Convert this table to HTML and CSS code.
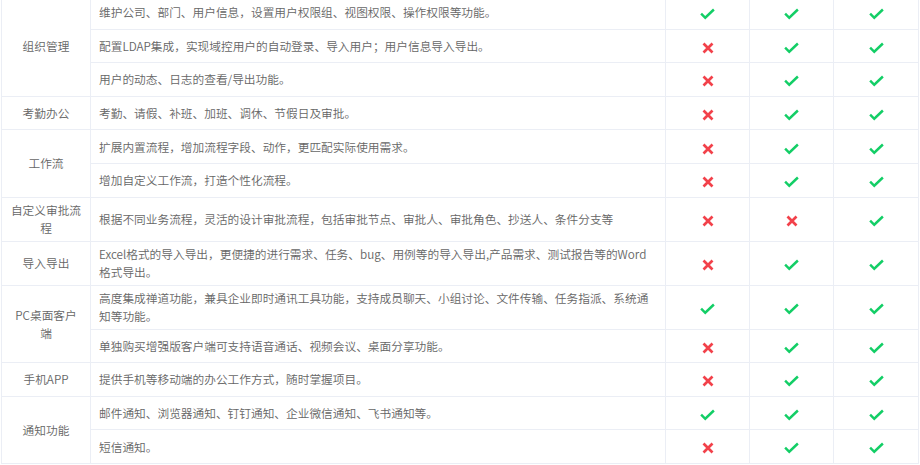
FILE: index.html
```html
<!DOCTYPE html>
<html lang="zh-CN">
<head>
    <meta charset="UTF-8">
    <meta name="viewport" content="width=device-width, initial-scale=1.0">
    <title>功能对比</title>
    <link rel="stylesheet" href="styles.css">
</head>
<body>

    <svg class="defs" width="0" height="0">
      <symbol id="yes" viewBox="0 0 16 12">
        <polyline points="1.2,5.6 5.6,10 14.8,1.2" fill="none" stroke="#13ce66" stroke-width="2.6" stroke-linejoin="miter" />
      </symbol>
      <symbol id="no" viewBox="0 0 12 12">
        <path d="M1.5 1.5 L10.5 10.5 M10.5 1.5 L1.5 10.5" fill="none" stroke="#f2414a" stroke-width="2.7" />
      </symbol>
    </svg>

    <table class="compare">
      <colgroup>
        <col class="col-cat">
        <col class="col-desc">
        <col class="col-mark">
        <col class="col-mark">
        <col class="col-last">
      </colgroup>
      <tbody>
        <tr>
          <td class="cat" rowspan="3">组织管理</td>
          <td class="desc">维护公司、部门、用户信息，设置用户权限组、视图权限、操作权限等功能。</td>
          <td class="mark"><svg class="ok"><use href="#yes"/></svg></td>
          <td class="mark"><svg class="ok"><use href="#yes"/></svg></td>
          <td class="mark"><svg class="ok"><use href="#yes"/></svg></td>
        </tr>
        <tr>
          <td class="desc">配置LDAP集成，实现域控用户的自动登录、导入用户；用户信息导入导出。</td>
          <td class="mark"><svg class="bad"><use href="#no"/></svg></td>
          <td class="mark"><svg class="ok"><use href="#yes"/></svg></td>
          <td class="mark"><svg class="ok"><use href="#yes"/></svg></td>
        </tr>
        <tr>
          <td class="desc">用户的动态、日志的查看/导出功能。</td>
          <td class="mark"><svg class="bad"><use href="#no"/></svg></td>
          <td class="mark"><svg class="ok"><use href="#yes"/></svg></td>
          <td class="mark"><svg class="ok"><use href="#yes"/></svg></td>
        </tr>
        <tr>
          <td class="cat">考勤办公</td>
          <td class="desc">考勤、请假、补班、加班、调休、节假日及审批。</td>
          <td class="mark"><svg class="bad"><use href="#no"/></svg></td>
          <td class="mark"><svg class="ok"><use href="#yes"/></svg></td>
          <td class="mark"><svg class="ok"><use href="#yes"/></svg></td>
        </tr>
        <tr>
          <td class="cat" rowspan="2">工作流</td>
          <td class="desc">扩展内置流程，增加流程字段、动作，更匹配实际使用需求。</td>
          <td class="mark"><svg class="bad"><use href="#no"/></svg></td>
          <td class="mark"><svg class="ok"><use href="#yes"/></svg></td>
          <td class="mark"><svg class="ok"><use href="#yes"/></svg></td>
        </tr>
        <tr>
          <td class="desc">增加自定义工作流，打造个性化流程。</td>
          <td class="mark"><svg class="bad"><use href="#no"/></svg></td>
          <td class="mark"><svg class="ok"><use href="#yes"/></svg></td>
          <td class="mark"><svg class="ok"><use href="#yes"/></svg></td>
        </tr>
        <tr>
          <td class="cat">自定义审批流程</td>
          <td class="desc">根据不同业务流程，灵活的设计审批流程，包括审批节点、审批人、审批角色、抄送人、条件分支等</td>
          <td class="mark"><svg class="bad"><use href="#no"/></svg></td>
          <td class="mark"><svg class="bad"><use href="#no"/></svg></td>
          <td class="mark"><svg class="ok"><use href="#yes"/></svg></td>
        </tr>
        <tr>
          <td class="cat">导入导出</td>
          <td class="desc">Excel格式的导入导出，更便捷的进行需求、任务、bug、用例等的导入导出,产品需求、测试报告等的Word格式导出。</td>
          <td class="mark"><svg class="bad"><use href="#no"/></svg></td>
          <td class="mark"><svg class="ok"><use href="#yes"/></svg></td>
          <td class="mark"><svg class="ok"><use href="#yes"/></svg></td>
        </tr>
        <tr>
          <td class="cat" rowspan="2">PC桌面客户端</td>
          <td class="desc">高度集成禅道功能，兼具企业即时通讯工具功能，支持成员聊天、小组讨论、文件传输、任务指派、系统通知等功能。</td>
          <td class="mark"><svg class="ok"><use href="#yes"/></svg></td>
          <td class="mark"><svg class="ok"><use href="#yes"/></svg></td>
          <td class="mark"><svg class="ok"><use href="#yes"/></svg></td>
        </tr>
        <tr>
          <td class="desc">单独购买增强版客户端可支持语音通话、视频会议、桌面分享功能。</td>
          <td class="mark"><svg class="bad"><use href="#no"/></svg></td>
          <td class="mark"><svg class="ok"><use href="#yes"/></svg></td>
          <td class="mark"><svg class="ok"><use href="#yes"/></svg></td>
        </tr>
        <tr>
          <td class="cat">手机APP</td>
          <td class="desc">提供手机等移动端的办公工作方式，随时掌握项目。</td>
          <td class="mark"><svg class="bad"><use href="#no"/></svg></td>
          <td class="mark"><svg class="ok"><use href="#yes"/></svg></td>
          <td class="mark"><svg class="ok"><use href="#yes"/></svg></td>
        </tr>
        <tr>
          <td class="cat" rowspan="2">通知功能</td>
          <td class="desc">邮件通知、浏览器通知、钉钉通知、企业微信通知、飞书通知等。</td>
          <td class="mark"><svg class="ok"><use href="#yes"/></svg></td>
          <td class="mark"><svg class="ok"><use href="#yes"/></svg></td>
          <td class="mark"><svg class="ok"><use href="#yes"/></svg></td>
        </tr>
        <tr>
          <td class="desc">短信通知。</td>
          <td class="mark"><svg class="bad"><use href="#no"/></svg></td>
          <td class="mark"><svg class="ok"><use href="#yes"/></svg></td>
          <td class="mark"><svg class="ok"><use href="#yes"/></svg></td>
        </tr>
      </tbody>
    </table>

</body>
</html>
```

FILE: styles.css
```css
body {
    margin: 0;
    background-color: #fff;
    color: #666;
    font-family: "Noto Sans CJK SC", "Microsoft YaHei", sans-serif;
    font-size: 11.7px;
    font-weight: 350;
}

.defs {
    position: absolute;
    width: 0;
    height: 0;
    overflow: hidden;
}

.compare {
    border-collapse: collapse;
    table-layout: fixed;
    width: 917px;
    margin: -5px 0 0 1px;
}

.col-cat  { width: 89px; }
.col-desc { width: 575px; }
.col-mark { width: 84px; }
.col-last { width: 85px; }

.compare tr {
    height: 33.6px;
}

.compare td {
    border: 1px solid #ebeef5;
    padding: 3.5px 8px;
    line-height: 18px;
    vertical-align: middle;
    text-align: left;
}

.compare td.desc {
    padding-right: 10px;
}

.compare td.cat {
    text-align: center;
    padding: 3.5px 8px;
}

.compare td.mark {
    text-align: center;
    padding: 0;
}

.mark svg {
    display: inline-block;
    vertical-align: middle;
}

.mark .ok {
    width: 15px;
    height: 12px;
}

.mark .bad {
    width: 12px;
    height: 12px;
}
```
